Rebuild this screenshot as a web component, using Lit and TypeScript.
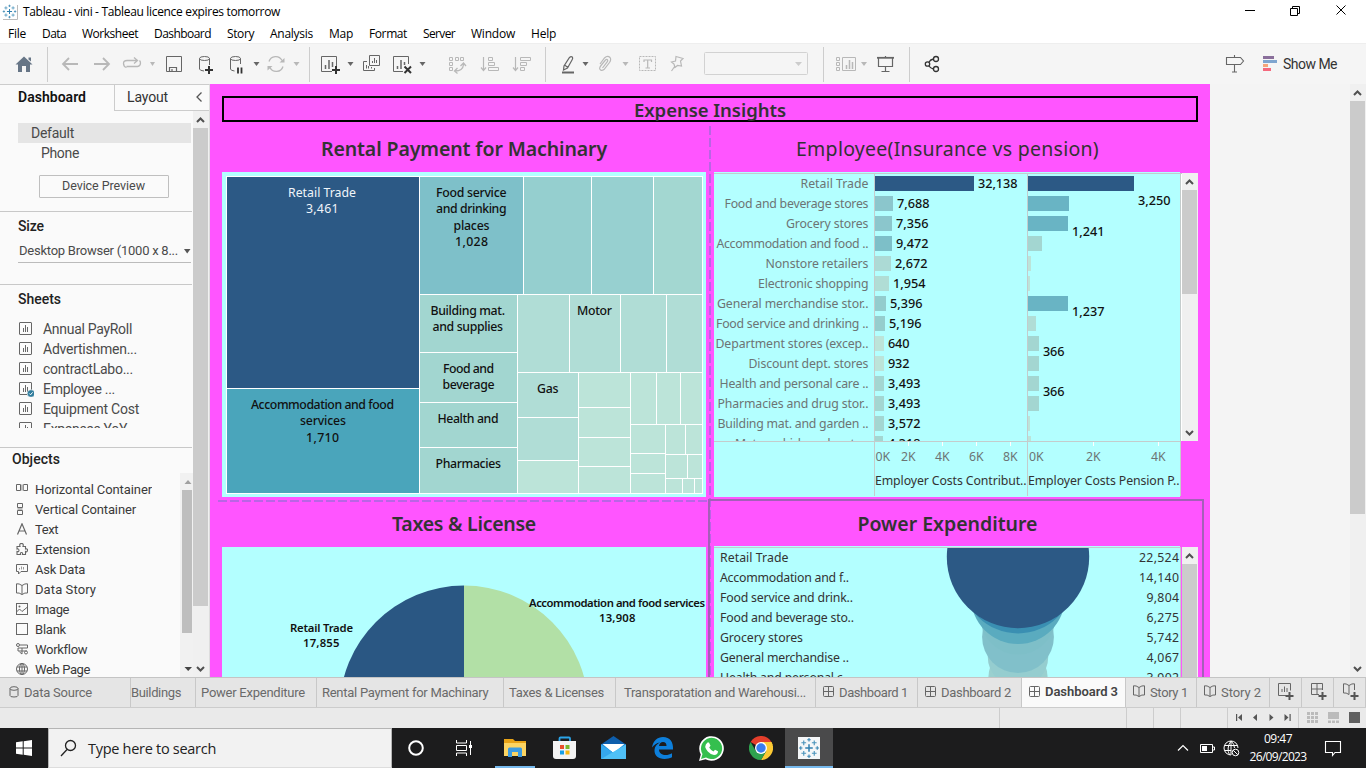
import { LitElement, html, svg, css } from 'lit';
import { customElement } from 'lit/decorators.js';

type Box = { x: number; y: number; w: number; h: number };

/* Icon drawn in window coordinates: its viewBox is its own place in the window. */
const icon = (b: Box, body: unknown, gap = 0) => html`<svg class="ic" width=${b.w} height=${b.h}
  viewBox="${b.x} ${b.y} ${b.w} ${b.h}" style="margin-left:${gap}px">${body}</svg>`;

const fit = (text: string, w: number, cls = '') => html`<span class="fit ${cls}" data-w=${w}>${text}</span>`;

const T = (x: number, y: number, w: number, text: string, cls = 'lb') =>
  svg`<text x=${x} y=${y} textLength=${w} class=${cls}>${text}</text>`;

const plus = (x: number, y: number, r: number, c: string, sw = 1) =>
  svg`<path d="M${x - r} ${y}H${x + r}M${x} ${y - r}V${y + r}" stroke=${c} stroke-width=${sw} fill="none"/>`;

const tableauMark = (cx: number, cy: number, k: number) => svg`
  ${plus(cx, cy, 3 * k, '#2f7fae', 1.2 * k)}
  ${[-1, 1].map(a => [-1, 1].map(b => plus(cx + 4.2 * k * a, cy + 4.2 * k * b, 1.9 * k, '#4a93bb', .9 * k)))}
  ${[-1, 1].map(a => svg`${plus(cx + 6.6 * k * a, cy, 1.4 * k, '#3b87b3', .9 * k)}${plus(cx, cy + 6.6 * k * a, 1.4 * k, '#3b87b3', .9 * k)}`)}`;

const chartGlyph = (x: number, y: number, s: number, c: string) => svg`
  <rect x=${x + .5} y=${y + .5} width=${s - 1} height=${s - 1} rx=".5" fill="none" stroke=${c}/>
  <path d="M${x + 4.5} ${y + 10}V${y + 6}M${x + 6.5} ${y + 10}V${y + 3}M${x + 8.5} ${y + 10}V${y + 5}" stroke=${c} fill="none"/>`;

const bookGlyph = (x: number, y: number, c: string) => svg`
  <path d="M${x + 6} ${y + 2.5}Q${x + 3} ${y + .3} ${x + .5} ${y + .8}V${y + 10}Q${x + 3} ${y + 9.4} ${x + 6} ${y + 11.5}Q${x + 9} ${y + 9.4} ${x + 11.5} ${y + 10}V${y + .8}Q${x + 9} ${y + .3} ${x + 6} ${y + 2.5}V${y + 11.5}" fill="none" stroke=${c}/>`;

const gridGlyph = (x: number, y: number, w: number, c: string) => svg`
  <rect x=${x + .5} y=${y + .5} width=${w - 1} height="10" rx="1" fill="none" stroke=${c}/>
  <path d="M${x + (w - 1) / 2 + .5} ${y}v11M${x} ${y + 5.5}h${w}" stroke=${c} fill="none"/>`;

const D = '#666', L = '#b8b8b8', K = '#333';

/* Toolbar content, left to right: x, width, drawing. */
const tools: [number, number, unknown][] = [
  [15, 18, svg`<path d="M24 56.500L32.500 64.500H30V72H26V66H22V72H18V64.500H15.500Z" fill="#667586"/><path d="M28.500 57.500h2.500v4l-2.500-2z" fill="#667586"/>`],
  [47, 1, 'sep'],
  [61, 18, svg`<path d="M78 64H63M69 58L63 64L69 70" fill="none" stroke=${L} stroke-width="1.800"/>`],
  [93, 18, svg`<path d="M94 64H109M103 58L109 64L103 70" fill="none" stroke=${L} stroke-width="1.800"/>`],
  [122, 20, svg`<path d="M126.500 67.500Q123.500 66.500 123.500 63.500Q123.500 60.500 127 60.500H137M134 57.500L137.500 60.500L134 63.500M126.500 66.500H137.500Q140.500 66 140.500 63Q140.500 61.500 139.500 60.500" fill="none" stroke=${L} stroke-width="1.300"/>`],
  [150, 6, svg`<path d="M150 62H155L152.500 66Z" fill=${L}/>`],
  [165, 18, svg`<path d="M166.500 56.500H181.500V71.500H166.500Z" fill="none" stroke=${D}/><path d="M169.500 71V67.500H176.500V71M172 71V69" fill="none" stroke=${D} stroke-width="1.200"/>`],
  [198, 17, svg`<path d="M204 71Q199.500 70.500 199.500 69V58.500M209.500 58.500V65" fill="none" stroke=${D}/><ellipse cx="204.500" cy="58.500" rx="5" ry="2" fill="none" stroke=${D}/><path d="M205 70H213M209 66V74" stroke=${K} stroke-width="2"/>`],
  [229, 15, svg`<path d="M234.500 71Q230.500 70.500 230.500 69V58.500M240.500 58.500V64" fill="none" stroke=${D}/><ellipse cx="235.500" cy="58.500" rx="5" ry="2" fill="none" stroke=${D}/><path d="M238 67.500V73.500M241.500 67.500V73.500" stroke=${K} stroke-width="1.800"/>`],
  [253, 7, svg`<path d="M253.500 62H259.500L256.500 66Z" fill=${D}/>`],
  [267, 18, svg`<path d="M269 61.500A7 7 0 0 1 282 60.500M283 66.500A7 7 0 0 1 270 67.500" fill="none" stroke=${L} stroke-width="1.300"/><path d="M279.500 62.500H284.500V58ZM272.500 66H267.500V70.500Z" fill=${L}/>`],
  [293, 7, svg`<path d="M293.500 62H299.500L296.500 66Z" fill=${L}/>`],
  [309, 1, 'sep'],
  [320, 22, svg`<path d="M332 71.500H321.500V56.500H336.500V66" fill="none" stroke=${D}/><path d="M325.500 69V65M329 69V60M332.500 67V62" stroke=${D} stroke-width="1.500"/><path d="M332 70H340M336 66V74" stroke=${K} stroke-width="2"/>`],
  [347, 7, svg`<path d="M347.500 62H353.500L350.500 66Z" fill=${D}/>`],
  [363, 18, svg`<path d="M369.500 55.500H379.500V65.500H369.500ZM367 61.500H363.500V70.500H374.500V68" fill="none" stroke=${D}/><path d="M372.500 63V61M374.500 63V58M376.500 63V60M366.500 68.500V65M368.500 68.500V66M371.500 68.500V67" stroke=${D}/>`],
  [392, 22, svg`<path d="M403 71.500H393.500V56.500H408.500V64" fill="none" stroke=${D}/><path d="M397.500 69V66M401 69V60M404.500 65V62" stroke=${D} stroke-width="1.500"/><path d="M404.500 66.500L411 73M411 66.500L404.500 73" stroke=${K} stroke-width="2"/>`],
  [419, 7, svg`<path d="M419.500 62H425.500L422.500 66Z" fill=${D}/>`],
  [448, 19, svg`<path d="M449.500 57.500h3v3h-3zM455.500 57.500h3v3h-3zM460.500 57.500h3v3h-3zM449.500 62.500h3v3h-3zM449.500 67.500h3v3h-3z" fill="none" stroke=${L}/><path d="M455 71Q463 71 463.500 64.500M460.500 66L463.500 63L466 66M457.500 68L454.500 71L457.500 73.500" fill="none" stroke=${L} stroke-width="1.300"/>`],
  [480, 20, svg`<path d="M483.500 57V70M481 67.500L483.500 70.500L486 67.500" fill="none" stroke=${L} stroke-width="1.200"/><path d="M488.500 57.500h4v3h-4zM488.500 62.500h6v3h-6zM488.500 67.500h10v3h-10z" fill="none" stroke=${L}/>`],
  [512, 20, svg`<path d="M515.500 57V70M513 67.500L515.500 70.500L518 67.500" fill="none" stroke=${L} stroke-width="1.200"/><path d="M520.500 57.500h10v3h-10zM520.500 62.500h6v3h-6zM520.500 67.500h4v3h-4z" fill="none" stroke=${L}/>`],
  [545, 1, 'sep'],
  [561, 15, svg`<path d="M569.500 57.500Q571 56 572.500 57.200Q573 58.500 572 60L567.500 68L563.500 70L564 66Z M564.500 65L568 67.500" fill="none" stroke=${D} stroke-width="1.200"/><path d="M562 72.500H574" stroke=${D} stroke-width="2"/>`],
  [582, 7, svg`<path d="M582.500 62H588.500L585.500 66Z" fill=${D}/>`],
  [598, 14, svg`<path d="M600 64L604.500 58Q607.500 55 610 57.500Q611.500 59.500 609.500 62.500L604 69.500Q601 71.500 599.800 69Q599.300 67.500 601 65.500L605.500 60Q607 58.800 607.600 60Q608 61 607 62.200L602.500 68" fill="none" stroke=${L} stroke-width="1.200"/>`],
  [622, 7, svg`<path d="M622.500 62H628.500L625.500 66Z" fill=${L}/>`],
  [639, 18, svg`<rect x="639.500" y="56.500" width="16" height="14" fill="none" stroke=${L} stroke-dasharray="2 1"/><path d="M644 62V60H651.500V62M647.700 60V68M645.500 68H650" fill="none" stroke=${L} stroke-width="1.200"/>`],
  [670, 15, svg`<path d="M676 56.500L683 58.500L680.500 61L681.500 66L677.500 65.500L675 67.500L674 64L671.500 62L675.500 61ZM675 66L671.500 71" fill="none" stroke=${L} stroke-width="1.200"/>`],
  [704, 104, svg`<rect x="704.500" y="52.500" width="103" height="22" rx="1" fill="#f5f5f5" stroke="#d2d2d2"/><path d="M795 62H802L798.500 66Z" fill="#ccc"/>`],
  [823, 1, 'sep'],
  [835, 22, svg`<path d="M836.500 57.500h3v3h-3zM836.500 62.500h3v3h-3zM836.500 67.500h3v3h-3zM842.500 57.500h13v13h-13z" fill="none" stroke=${L}/><path d="M846.500 69V65M849.500 69V60M852.500 69V62" stroke=${L} stroke-width="1.500"/>`],
  [861, 7, svg`<path d="M861 62H867L864 66Z" fill=${L}/>`],
  [877, 18, svg`<path d="M877 57.800H894" stroke=${D} stroke-width="1.800"/><path d="M878.500 58V66.500H892.500V58M885.500 66V71.500M881.500 71.500H889.500M885.500 56V58" fill="none" stroke=${D} stroke-width="1.200"/>`],
  [909, 1, 'sep'],
  [924, 17, svg`<g fill="none" stroke=${K} stroke-width="1.300"><circle cx="927.500" cy="64" r="2.200"/><circle cx="936" cy="59" r="2.500"/><circle cx="936" cy="69" r="2.500"/><path d="M929 62Q930.500 59.500 933.500 59M929 66Q930.500 68.500 933.500 69"/></g>`],
  [1225, 20, svg`<path d="M1226.500 57.500H1240.500L1243.500 61L1240.500 64.500H1226.500ZM1234.500 55V57M1234.500 64.500V72M1232 72H1237" fill="none" stroke=${D} stroke-width="1.100"/>`],
  [1263, 15, svg`<path d="M1263 56h11v3h-11z" fill="#8a6f9b"/><path d="M1263 60h14v3h-14z" fill="#7fa5cf"/><path d="M1263 64h5v3h-5z" fill="#f5a57a"/><path d="M1263 68h8v3h-8z" fill="#f5697d"/>`],
];

const menus: [string, number, number][] = [['File', 8, 18], ['Data', 42, 24], ['Worksheet', 82, 56], ['Dashboard', 154, 57], ['Story', 227, 27], ['Analysis', 270, 43], ['Map', 329, 24], ['Format', 369, 38], ['Server', 423, 32], ['Window', 471, 44], ['Help', 531, 25]];

const sheets: [string, number][] = [['Annual PayRoll', 89], ['Advertishmen...', 94], ['contractLabo...', 90], ['Employee ...', 72], ['Equipment Cost', 96], ['Expenses YoY', 84]];

const objects: [string, number, unknown][] = [
  ['Horizontal Container', 117, svg`<path d="M.5 1.500h4v6h-4zM7.500 1.500h4v6h-4z" fill="none" stroke="#666"/><path d="M5 1.500h2.500v6H5z" fill="#bbb"/>`],
  ['Vertical Container', 101, svg`<path d="M1.500 .500h5v4h-5zM1.500 7.500h5v4h-5z" fill="none" stroke="#666"/><path d="M1.500 5h5v2h-5z" fill="#bbb"/>`],
  ['Text', 23, svg`<path d="M1.500 11.500L6 .800L10.500 11.500M3 8H9" fill="none" stroke="#666" stroke-width="1.200"/>`],
  ['Extension', 55, svg`<path d="M1 3.500H4Q3 .500 5.500 .500T7 3.500H9.500V6Q12 5.500 11.500 7.500T9.500 8.500V11.500H6.500Q7 9.500 5.500 9.500T4.500 11.500H1V8.500Q3 9 3 7.300T1 6Z" fill="none" stroke="#666" stroke-width="1.100"/>`],
  ['Ask Data', 50, svg`<path d="M.5 1.500H11.500V8.500H5L2.500 11V8.500H.5Z" fill="none" stroke="#666"/><path d="M3.500 6.500V5M5.500 6.500V3.500M7.500 6.500V4" stroke="#999"/>`],
  ['Data Story', 61, bookGlyph(0, 0, '#666')],
  ['Image', 34, svg`<rect x=".5" y=".5" width="11" height="11" fill="none" stroke="#666"/><path d="M.5 9L3.500 6L6 8.500L11.500 4" fill="none" stroke="#666"/><circle cx="3.500" cy="3.500" r="1" fill="#666"/>`],
  ['Blank', 31, svg`<rect x=".5" y=".5" width="11" height="11" fill="none" stroke="#666"/>`],
  ['Workflow', 52, svg`<path d="M4 2H11.500V5H2V8H11M6 5V11L3.500 9" fill="none" stroke="#666"/><circle cx="2" cy="2" r="1.500" fill="#fafafa" stroke="#666"/><circle cx="10" cy="9.500" r="1.500" fill="#fafafa" stroke="#666"/>`],
  ['Web Page', 55, svg`<g fill="none" stroke="#666"><circle cx="6" cy="6" r="5.500"/><ellipse cx="6" cy="6" rx="2.500" ry="5.500"/><path d="M1 4H11M1 8H11M6 .500V11.500"/></g>`],
];

const A = '#95cfcf', B = '#a2d6d0', C = '#b0ddd6', E = '#bce4d9';
/* Treemap cells: left, top, right, bottom, fill. */
const cells: [number, number, number, number, string][] = [
  [227, 177, 419, 388, '#2c5985'], [227, 389, 419, 493, '#4aa5bb'],
  [420, 177, 523, 294, '#7ec0c9'], [524, 177, 591, 294, A], [592, 177, 653, 294, '#97d0d0'], [654, 177, 702, 294, '#a3d7d1'],
  [420, 295, 517, 352, B], [420, 353, 517, 402, B], [420, 403, 517, 447, B], [420, 448, 517, 493, B],
  [518, 295, 569, 372, C], [570, 295, 620, 372, C], [621, 295, 666, 372, C], [667, 295, 702, 372, C],
  [518, 373, 578, 417, C], [518, 418, 578, 460, C], [518, 461, 578, 493, E],
  [579, 373, 630, 407, E], [579, 408, 630, 437, E], [579, 438, 630, 466, E], [579, 467, 630, 493, E],
  [631, 373, 656, 424, E], [657, 373, 680, 424, E], [681, 373, 702, 424, E],
  [631, 425, 665, 453, E], [631, 454, 665, 473, E], [631, 474, 665, 493, E],
  [666, 425, 685, 454, E], [686, 425, 702, 454, E], [666, 455, 687, 478, E], [688, 455, 702, 478, E],
  [666, 479, 682, 493, E], [683, 479, 694, 493, E], [695, 479, 702, 493, E],
];

const F = '#69b4c4', G = '#a3d6d1';
/* label, label left, first bar end, fill, value, value left, value width, second bar end, fill */
const costs: [string, number, number, string, string, number, number, number, string][] = [
  ['Retail Trade', 800.5, 974, '#2c5985', '32,138', 978, 39.5, 1134, '#2c5985'],
  ['Food and beverage stores', 724.5, 893, '#8bc6cc', '7,688', 897, 32.5, 1069, F],
  ['Grocery stores', 786, 892, '#8bc6cc', '7,356', 896, 32.5, 1068, F],
  ['Accommodation and food ..', 716.5, 892, '#7dbfc8', '9,472', 896, 32.5, 1042, G],
  ['Nonstore retailers', 765.5, 891, '#acdad5', '2,672', 895, 32.5, 1031, E],
  ['Electronic shopping', 758, 889, '#b0ddd5', '1,954', 893, 32.5, 1030, E],
  ['General merchandise stor..', 717, 886, '#93cccd', '5,396', 890, 32.5, 1068, F],
  ['Food service and drinking ..', 716, 885, '#95cdcd', '5,196', 889, 32.5, 1036, C],
  ['Department stores (excep..', 715.5, 884, E, '640', 888, 21.5, 1039, G],
  ['Discount dept. stores', 748.5, 884, E, '932', 888, 21.5, 1039, G],
  ['Health and personal care ..', 719.5, 884, G, '3,493', 888, 32.5, 1039, G],
  ['Pharmacies and drug stor..', 717.5, 884, G, '3,493', 888, 32.5, 1039, G],
  ['Building mat. and garden ..', 717.5, 884, G, '3,572', 888, 32.5, 1030, E],
  ['Motor vehicle and parts ..', 735, 883, G, '4,318', 888, 32.5, 1031, E],
];

/* label, label width, value, value left, radius, fill */
const power: [string, number, string, number, number, string][] = [
  ['Retail Trade', 68, '22,524', 1139, 71.2, '#2c5985'],
  ['Accommodation and f..', 128.5, '14,140', 1139, 56.4, '#3a8fb2'],
  ['Food service and drink..', 132.5, '9,804', 1146.5, 47, '#5aabbf'],
  ['Food and beverage sto..', 133.5, '6,275', 1146.5, 37.6, '#7ebfc8'],
  ['Grocery stores', 82.5, '5,742', 1146.5, 35.9, '#81c0ca'],
  ['General merchandise ..', 128.5, '4,067', 1146.5, 30.2, '#95cdcf'],
  ['Health and personal c..', 128.5, '3,902', 1146.5, 29.6, '#9ad0cf'],
];

/* Bottom tabs: label, cell width, text width, left padding, kind */
const tabs: [string, number, number, number, string][] = [
  ['Data Source', 131, 68, 9, 'db'], ['Buildings', 65, 50, 0, ''], ['Power Expenditure', 121, 104, 5, ''],
  ['Rental Payment for Machinary', 187, 166.5, 5, ''], ['Taxes & Licenses', 112, 95, 5, ''],
  ['Transporatation and Warehousi...', 200, 182, 8, ''], ['Dashboard 1', 102, 69, 7, 'grid'],
  ['Dashboard 2', 104, 70, 7, 'grid'], ['Dashboard 3', 104, 73, 7, 'grid on'],
  ['Story 1', 71, 38, 7, 'book'], ['Story 2', 73, 40, 7, 'book'],
];

const vscroll = (x: number, y: number, y2: number, t1: number, t2: number, down = true) => svg`
  <rect x=${x} y=${y} width="16" height=${y2 - y} fill="#f0f0f0"/>
  <rect x=${x} y=${t1} width="15" height=${t2 - t1} fill="#cbcbcb"/>
  <path d="M${x + 4} ${y + 11}L${x + 7.500} ${y + 7.500}L${x + 11} ${y + 11}" fill="none" stroke="#505050" stroke-width="2"/>
  ${down ? svg`<path d="M${x + 4} ${y2 - 10}L${x + 7.500} ${y2 - 6.500}L${x + 11} ${y2 - 10}" fill="none" stroke="#505050" stroke-width="2"/>` : ''}`;

@customElement('app-root')
export class AppRoot extends LitElement {
  static styles = css`
    :host { display: flex; flex-direction: column; width: 1366px; height: 768px; overflow: hidden; background: #fff;
      font-family: "Open Sans", "Noto Sans", sans-serif; font-size: 12px; color: #000; }
    * { box-sizing: border-box; }
    svg { display: block; flex: none; }
    .ic { flex: none; }
    .fit { white-space: pre; display: inline-block; flex: none; }
    .titlebar { height: 24px; display: flex; align-items: center; padding-left: 2px; }
    .titlebar .fit { margin-left: 3px; line-height: 22px; }
    .titlebar .win { margin-left: auto; }
    .menubar { height: 19px; display: flex; line-height: 20px; }
    .toolbar { height: 41px; background: #f5f5f5; border-top: 1px solid #eee; display: flex; align-items: center; }
    .sep { width: 1px; height: 35px; background: #cdcdcd; flex: none; }
    .show { font-family: Roboto, sans-serif; font-size: 14px; color: #333; margin-left: 5px; }
    .main { height: 593px; display: flex; background: #f4f4f4; overflow: hidden; }
    .side { width: 210px; background: #fafafa; border-top: 1px solid #ccc; border-right: 1px solid #ddd; display: flex; flex-direction: column;
      font-family: Roboto, sans-serif; font-size: 14px; color: #4a4a4a; }
    .sidetabs { display: flex; height: 26px; flex: none; line-height: 25px; }
    .sidetabs .a { width: 114px; padding-left: 18px; font-weight: 600; color: #111; }
    .sidetabs .b { flex: 1; border-left: 1px solid #ccc; border-bottom: 1px solid #ccc; padding-left: 12px; display: flex; line-height: 25px; color: #333; }
    .sidebody { display: flex; flex: 1; min-height: 0; }
    .panel { width: 193px; display: flex; flex-direction: column; }
    .block { border-bottom: 1px solid #c8c8c8; width: 192px; padding-left: 18px; flex: none; }
    .devices { height: 101px; padding-top: 12px; }
    .device { height: 20px; line-height: 21px; padding-left: 13px; width: 173px; }
    .device.on { background: #e5e5e5; }
    .device.sub { padding-left: 23px; }
    .preview { width: 130px; height: 23px; margin: 12px 0 0 21px; border: 1px solid #bfbfbf; border-radius: 1px; font-size: 12.5px; line-height: 20px; padding-left: 22px; }
    .size { height: 73px; padding-top: 4px; }
    .head { font-weight: 500; color: #222; height: 22px; line-height: 21px; }
    .drop { display: flex; align-items: center; height: 25px; width: 173px; border-bottom: 1px solid #bbb; font-size: 13px; padding-left: 1px; }
    .sheets { height: 163px; padding-top: 4px; overflow: hidden; }
    .list { margin-top: 8px; height: 109px; overflow: hidden; }
    .row { display: flex; height: 20px; align-items: center; }
    .list .row svg { margin: 0 9px 2px 1px; }
    .objects { padding: 1px 0 0 12px; flex: 1; min-height: 0; overflow: hidden; display: flex; flex-direction: column; }
    .objwrap { display: flex; height: 206px; justify-content: space-between; padding-top: 1px; }
    .objlist { padding: 7px 0 0 4px; color: #3a3a3a; font-size: 13px; overflow: hidden; }
    .objlist .row svg { margin-right: 7px; }
    .canvas { position: relative; width: 1000px; background: #ff55ff; padding: 12px 12px 0; overflow: hidden; font-family: "Noto Sans", sans-serif; color: #333; flex: none; }
    .headline { height: 26px; border: 2px solid #000; text-align: center; font-size: 18.5px; font-weight: 600; line-height: 24px; }
    .grid { display: grid; grid-template-columns: 484px 484px; column-gap: 8px; grid-template-rows: 50px 325px 49px 131px; }
    .cardtitle { font-size: 19.5px; font-weight: 600; text-align: center; line-height: 54px; height: 50px; }
    .cardtitle.plain { font-weight: 400; padding-right: 17px; }
    .cardtitle.shift { padding-right: 17px; }
    .guides { position: absolute; left: 0; top: 0; }
    .lb { font: 500 12.300px "Noto Sans", sans-serif; fill: #111; }
    .vl { font: 500 12.700px "Noto Sans", sans-serif; fill: #111; }
    .wt { font: 400 12.300px "Noto Sans", sans-serif; fill: #f0f5fa; }
    .gr { font: 400 12.300px "Noto Sans", sans-serif; fill: #6c7474; }
    .dk { font: 400 12.300px "Noto Sans", sans-serif; fill: #333; }
    .pb { font: 600 11.300px "Noto Sans", sans-serif; fill: #111; }
    .outer { margin-left: auto; }
    .tabs { height: 31px; display: flex; background: #e5e5e5; border-top: 1px solid #c4c4c4; border-bottom: 1px solid #ccc; font-family: Roboto, sans-serif; font-size: 13px; color: #6a6a6a; }
    .tab { border-right: 1px solid #c8c8c8; display: flex; align-items: center; flex: none; }
    .tab svg { margin-right: 5px; margin-bottom: 2px; }
    .tab.on { background: #fafafa; color: #444; font-weight: 600; padding-bottom: 2px; }
    .tab.on svg { margin-bottom: 0; }
    .status { height: 20px; background: #eaeaea; }
    .taskbar { height: 40px; background: #1c1c1d; display: flex; align-items: center; color: #fff; }
    .search { width: 344px; height: 40px; background: #f2f2f2; border: 1px solid #b5b5b5; border-bottom-color: #ddd; margin-left: 16px; display: flex; align-items: center; font-size: 14.5px; color: #222; padding-left: 11px; }
    .search .fit { margin-left: 10px; }
    .app { height: 40px; width: 49px; display: flex; justify-content: center; align-items: center; flex: none; }
    .app.lead { width: 48px; }
    .app.run { border-bottom: 2px solid #76b9ed; width: 40px; margin: 0 5px 0 7px; padding-top: 2px; }
    .app.front { background: #4a4a4b; border-bottom: 2px solid #76b9ed; width: 48px; padding-top: 2px; }
    .clock { display: flex; flex-direction: column; align-items: center; font-size: 12px; line-height: 18px; margin-left: 9px; width: 58px; }
  `;

  firstUpdated() {
    this.spread();
    document.fonts?.ready.then(() => this.spread());
  }

  /* Tracks each label so that it fills the width its data gives. */
  private spread() {
    this.renderRoot.querySelectorAll<HTMLElement>('.fit').forEach(el => {
      el.style.letterSpacing = '0px';
      const n = (el.textContent || '').length;
      el.style.letterSpacing = `${(Number(el.dataset.w) - el.getBoundingClientRect().width) / n}px`;
    });
  }

  private toolbar() {
    let at = 0;
    return tools.map(([x, w, body]) => {
      const gap = x - at;
      at = x + w;
      return body === 'sep' ? html`<i class="sep" style="margin-left:${gap}px"></i>`
        : icon({ x, y: 50, w, h: 28 }, body, gap);
    });
  }

  private menu() {
    let at = 0;
    return menus.map(([t, x, w]) => {
      const gap = x - at;
      at = x + w;
      return html`<span style="margin-left:${gap}px">${fit(t, w)}</span>`;
    });
  }

  private sidebar() {
    return html`<aside class="side">
      <div class="sidetabs"><div class="a">${fit('Dashboard', 68)}</div>
        <div class="b">${fit('Layout', 41)}${icon({ x: 194, y: 85, w: 10, h: 24 }, svg`<path d="M201.500 92.500L197 97L201.500 101.500" fill="none" stroke="#555" stroke-width="1.300"/>`, 26)}</div></div>
      <div class="sidebody"><div class="panel">
        <section class="block devices"><div class="device on">${fit('Default', 43)}</div><div class="device sub">${fit('Phone', 38)}</div>
          <div class="preview">${fit('Device Preview', 83)}</div></section>
        <section class="block size"><div class="head">${fit('Size', 26)}</div>
          <div class="drop">${fit('Desktop Browser (1000 x 8...', 159)}${icon({ x: 184, y: 240, w: 7, h: 20 }, svg`<path d="M184 249H190.500L187.200 253.500Z" fill="#555"/>`, 6)}</div></section>
        <section class="block sheets"><div class="head">${fit('Sheets', 43)}</div><div class="list">
          ${sheets.map(([t, w], i) => html`<div class="row"><svg width="15" height="17" viewBox="0 0 15 17">${chartGlyph(0, 2, 13, '#666')}
            ${i === 3 ? svg`<circle cx="12" cy="13.500" r="3.800" fill="#2f7c9c" stroke="#fafafa" stroke-width=".6"/><path d="M10.300 13.500l1.300 1.300l2-2.500" stroke="#fff" fill="none"/>` : ''}</svg>${fit(t, w)}</div>`)}
        </div></section>
        <section class="objects"><div class="head">${fit('Objects', 48)}</div><div class="objwrap"><div class="objlist">
          ${objects.map(([t, w, g]) => html`<div class="row"><svg width="12" height="12" viewBox="0 0 12 12">${g}</svg>${fit(t, w)}</div>`)}</div>
          ${icon({ x: 180, y: 472, w: 13, h: 205 }, svg`<rect x="180" y="473" width="13" height="204" fill="#f1f1f1"/><rect x="182" y="490" width="10" height="143" fill="#bebebe"/><path d="M184.500 484L188 480L191.500 484Z" fill="#a0a0a0"/><path d="M184.500 667H192L188.200 671Z" fill="#444"/>`)}
        </div></section></div>
        ${icon({ x: 193, y: 111, w: 16, h: 566 }, vscroll(193, 111, 677, 128, 606))}
      </div></aside>`;
  }

  private treemap() {
    const t: [number, number, number, string, string?][] = [
      [288, 197, 68, 'Retail Trade', 'wt'], [306, 213, 32.5, '3,461', 'wt'],
      [251, 409, 143, 'Accommodation and food'], [300, 425, 46, 'services'], [306, 442, 33, '1,710'],
      [436, 197, 70.5, 'Food service'], [436, 213, 70.5, 'and drinking'], [453.5, 230, 36, 'places'], [455, 246, 33, '1,028'],
      [430.5, 315, 74.5, 'Building mat.'], [432.5, 331, 70.5, 'and supplies'], [443, 373, 51, 'Food and'], [442.5, 389, 52, 'beverage'],
      [437.5, 423, 61, 'Health and'], [435.5, 468, 65.5, 'Pharmacies'], [577, 315, 35, 'Motor'], [537, 393, 21.5, 'Gas']];
    return icon({ x: 222, y: 172, w: 484, h: 325 }, svg`<rect x="222" y="172" width="484" height="325" fill="#b3ffff"/>
      <rect x="226" y="176" width="477" height="318" fill="#fff"/>
      ${cells.map(([a, b, c, d, f]) => svg`<rect x=${a} y=${b} width=${c - a} height=${d - b} fill=${f}/>`)}
      ${t.map(([x, y, w, s, c]) => T(x, y, w, s, c || 'lb'))}`);
  }

  private bars() {
    const ticks: [number, number, string][] = [[875.5, 0, '0K'], [901, 908, '2K'], [935, 942, '4K'], [969, 976, '6K'], [1003, 1010, '8K'], [1029, 0, '0K'], [1086, 1093, '2K'], [1151, 1158, '4K']];
    return icon({ x: 714, y: 172, w: 484, h: 325 }, svg`<defs><clipPath id="rows"><rect x="714" y="174" width="466" height="267"/></clipPath></defs>
      <rect x="714" y="172" width="466" height="325" fill="#b3ffff"/>
      <g clip-path="url(#rows)">${costs.map(([l, lx, e1, f1, v, vx, vw, e2, f2], i) => svg`
        ${T(lx, 188 + 20 * i, 868.5 - lx, l, 'gr')}
        <rect x="875" y=${176 + 20 * i} width=${e1 - 875} height="15" fill=${f1}/>
        ${T(vx, 188 + 20 * i, vw, v, 'vl')}
        <rect x="1028" y=${176 + 20 * i} width=${e2 - 1028} height="15" fill=${f2}/>`)}</g>
      ${T(1138, 205, 32.5, '3,250', 'vl')}${T(1072, 236, 32.5, '1,241', 'vl')}${T(1072, 316, 32.5, '1,237', 'vl')}${T(1043, 356, 21.5, '366', 'vl')}${T(1043, 396, 21.5, '366', 'vl')}
      <path d="M714 173.500H1182M714 441.500H1181M874.500 174V496M1027.500 174V496M1180.500 174V496" stroke="#c4cccc" fill="none"/>
      ${ticks.map(([x, k, s]) => svg`${T(x, 461, 14.5, s, 'gr')}${k ? svg`<path d="M${k + .5} 442V446" stroke="#fff"/>` : ''}`)}
      ${T(875, 485, 151.5, 'Employer Costs Contribut..', 'dk')}${T(1028, 485, 151.5, 'Employer Costs Pension P..', 'dk')}
      <path d="M1181.500 174V441" stroke="#fff"/>
      ${vscroll(1182, 173, 441, 190, 294)}`);
  }

  private pie() {
    return icon({ x: 222, y: 546, w: 484, h: 131 }, svg`<rect x="222" y="547" width="484" height="130" fill="#b3ffff"/>
      <path d="M464 710V585.500A124.500 124.500 0 0 0 339.500 710Z" fill="#2a5783"/>
      <path d="M464 710V585.500A124.500 124.500 0 0 1 588.500 710Z" fill="#b2e0a6"/>
      ${T(290, 632, 63, 'Retail Trade', 'pb')}${T(303, 647, 36.5, '17,855', 'pb')}
      ${T(529, 607, 176, 'Accommodation and food services', 'pb')}${T(599, 622, 36.5, '13,908', 'pb')}`);
  }

  private circles() {
    return icon({ x: 714, y: 546, w: 484, h: 131 }, svg`<defs><clipPath id="funnel"><rect x="714" y="548" width="466" height="129"/></clipPath></defs>
      <rect x="714" y="546" width="466" height="131" fill="#b3ffff"/>
      <g clip-path="url(#funnel)">${power.map((p, i) => [p, i] as const).reverse().map(([p, i]) => svg`<circle cx="1018" cy=${557 + 20 * i} r=${p[4]} fill=${p[5]}/>`)}</g>
      ${power.map(([l, w, v, vx], i) => svg`${T(720, 562 + 20 * i, w + .5, l, 'dk')}${T(vx, 562 + 20 * i, 1179 - vx, v, 'dk')}`)}
      <path d="M714 547.500H1181M1180.500 548V677" stroke="#c4cccc" fill="none"/>
      ${vscroll(1182, 547, 677, 564, 677, false)}`);
  }

  private tabGlyph(kind: string) {
    if (kind === 'db') return html`<svg width="10" height="12" viewBox="0 0 10 12"><path d="M1 2.500V9.500Q1 11 5 11T9 9.500V2.500" fill="none" stroke="#666"/><ellipse cx="5" cy="2.500" rx="4" ry="1.800" fill="none" stroke="#666"/></svg>`;
    if (kind.startsWith('grid')) return html`<svg width="11" height="12" viewBox="0 0 11 12">${gridGlyph(0, 0, 11, '#666')}</svg>`;
    if (kind === 'book') return html`<svg width="12" height="13" viewBox="0 0 12 13">${bookGlyph(0, 0, '#666')}</svg>`;
    return '';
  }

  render() {
    return html`
      <header class="titlebar">${icon({ x: 2, y: 3, w: 18, h: 17 }, svg`<path d="M3 18.500H17.500V4" fill="none" stroke="#bbb"/>${tableauMark(9.5, 10.5, .85)}`)}
        ${fit('Tableau - vini - Tableau licence expires tomorrow', 257)}
        <span class="win">${icon({ x: 1240, y: 0, w: 126, h: 24 }, svg`<path d="M1245 10.500H1255M1290.500 8.500H1297.500V15.500H1290.500ZM1292.500 8V6.500H1299.500V13.500H1298M1336.500 5.500L1345.500 14.500M1345.500 5.500L1336.500 14.500" fill="none" stroke="#000"/>`)}</span></header>
      <nav class="menubar">${this.menu()}</nav>
      <div class="toolbar">${this.toolbar()}<span class="show">${fit('Show Me', 54)}</span></div>
      <main class="main">${this.sidebar()}
        <section class="canvas"><div class="headline">${fit('Expense Insights', 152)}</div>
          <div class="grid">
            <div class="cardtitle">${fit('Rental Payment for Machinary', 286)}</div><div class="cardtitle plain">${fit('Employee(Insurance vs pension)', 303)}</div>
            ${this.treemap()}${this.bars()}
            <div class="cardtitle">${fit('Taxes & License', 144)}</div><div class="cardtitle shift">${fit('Power Expenditure', 180)}</div>
            ${this.pie()}${this.circles()}
          </div>
          <svg class="guides" width="1000" height="593" viewBox="210 84 1000 593">
            <path d="M710 126V677M218 501H708" fill="none" stroke="#a968dd" stroke-width="2" stroke-dasharray="9 3" opacity=".8"/>
            <path d="M709 677V500H1203V677" fill="none" stroke="#a45fb8" stroke-width="2"/>
          </svg></section>
        <span class="outer">${icon({ x: 1350, y: 84, w: 16, h: 593 }, vscroll(1350, 84, 677, 101, 514))}</span>
      </main>
      <div class="tabs">${tabs.map(([t, w, tw, pad, k]) => html`<div class="tab ${k === 'grid on' ? 'on' : ''}" style="width:${w}px;padding-left:${pad}px">${this.tabGlyph(k)}${fit(t, tw)}</div>`)}
        ${[0, 1, 2].map(i => html`<div class="tab" style="width:32px;padding-left:${i === 0 ? 8 : 9}px"><svg width="17" height="17" viewBox="0 0 17 17">
          ${i === 0 ? svg`<path d="M8 12.500H.500V.500H12.500V7.500" fill="none" stroke="#666"/><path d="M4 9V6M6.500 9V3.500M9 9V5" stroke="#666"/>`
            : i === 1 ? svg`<path d="M8 11.500H.500V.500H11.500V7M6 .500V11.500M.500 6H11.500" fill="none" stroke="#666"/>` : svg`<path d="M6 11.500Q3 9.400 .500 10V.800Q3 .300 6 2.500Q9 .300 11.500 .800V7M6 2.500V11.500" fill="none" stroke="#666"/>`}
          <path d="M7.500 13H15.500M11.500 9V17" stroke="#555" stroke-width="2"/></svg></div>`)}</div>
      <div class="status">${icon({ x: 0, y: 708, w: 1366, h: 20 }, svg`
        <path d="M999.500 708V728M1126.500 708V728M1153.500 708V728M1180.500 708V728M1227.500 708V728M1298.500 708V728" stroke="#cdcdcd"/>
        <path d="M1236 714h1.200v7h-1.200zM1242 714v7l-4-3.500zM1257 714v7l-4-3.500zM1269.500 714v7l4-3.500zM1284.500 714v7l4-3.500zM1289.500 714h1.200v7h-1.200z" fill="#555"/>
        ${[0, 1, 2].map(r => [0, 1, 2].map(c => svg`<rect x=${1307 + c * 4} y=${712 + r * 4} width="3" height="3" fill="#bbb"/>`))}
        <path d="M1328 712h11v7h-11zM1328 720.500h3v2.500h-3zM1332 720.500h3v2.500h-3zM1336 720.500h3v2.500h-3z" fill="#bbb"/><rect x="1349" y="712" width="11" height="11" fill="#606060"/>`)}</div>
      <footer class="taskbar">
        ${icon({ x: 16, y: 738, w: 16, h: 20 }, svg`<path d="M16 742.300L22.700 741.300V747.500H16ZM23.700 741.200L32 740V747.500H23.700ZM16 748.500H22.700V754.700L16 753.700ZM23.700 748.500H32V756L23.700 754.800Z" fill="#fff"/>`, 16)}
        <div class="search">${icon({ x: 60, y: 738, w: 18, h: 20 }, svg`<circle cx="70.500" cy="745.500" r="5" fill="none" stroke="#222" stroke-width="1.300"/><path d="M67 749.500L61 756" stroke="#222" stroke-width="1.300"/>`)}${fit('Type here to search', 128)}</div>
        <span class="app lead"><svg width="18" height="18" viewBox="0 0 18 18"><circle cx="9" cy="9" r="6.800" fill="none" stroke="#fff" stroke-width="2"/></svg></span>
        <span class="app lead"><svg width="16" height="16" viewBox="0 0 16 16"><path d="M.5 0V3H10.500V0M.5 16V13H10.500V16M.5 5.500H10.500V10.500H.500ZM14.500 1V15" fill="none" stroke="#fff"/><rect x="13" y="5" width="3" height="3" fill="#fff"/></svg></span>
        <span class="app run"><svg width="22" height="20" viewBox="0 0 22 20"><path d="M0 1H9L11 3H22V18H0Z" fill="#e8a317"/><path d="M0 5H22V18H0Z" fill="#fcd462"/><path d="M4 19V11Q4 9.500 5.500 9.500H16.500Q18 9.500 18 11V19H14V14H8V19Z" fill="#3d9be0"/></svg></span>
        <span class="app"><svg width="24" height="24" viewBox="0 0 24 24"><path d="M6.500 6V2.500Q6.500 1.500 7.500 1.500H16Q17 1.500 17 2.500V6" fill="none" stroke="#2ba4e8" stroke-width="1.800"/><path d="M0 5H23V20Q23 23 20 23H3Q0 23 0 20Z" fill="#f3f3f3"/><path d="M7 9h4v4H7z" fill="#e9502c"/><path d="M12.500 9h4v4h-4z" fill="#7cb82b"/><path d="M7 14.500h4v4H7z" fill="#18a0e8"/><path d="M12.500 14.500h4v4h-4z" fill="#f7b712"/></svg></span>
        <span class="app"><svg width="25" height="24" viewBox="0 0 25 24"><path d="M0 8.500L12.500 0L25 8.500V12H0Z" fill="#0e5eac"/><path d="M0 8.500H25V23H0Z" fill="#1b8fdd"/><path d="M1.500 8H23.500L12.500 17Z" fill="#fff"/><path d="M0 8.500L12.500 17L25 8.500V23H0Z" fill="#1b8fdd"/><path d="M0 23L12.500 17L0 8.500Z" fill="#35a8ee"/><path d="M0 23L25 8.500V23Z" fill="#4fc0f7"/></svg></span>
        <span class="app"><svg width="22" height="22" viewBox="0 0 22 22"><path d="M0 10.500C1 4 5.500 0 11 0C18 0 21.500 5 21 12.500H7C7 16.500 10.500 18 13.500 18C16 18 18 17.300 20 16.200V20.300C17.500 21.600 15.500 22 12.500 22C6 22 2.300 18.500 2.500 13C2.600 9.500 5 6.800 8 5.500C4.500 6 2 7.800 0 10.500ZM7 9H14.500C14.500 6.500 13.300 5 11 5C8.800 5 7.500 6.500 7 9Z" fill="#0d7fdb"/></svg></span>
        <span class="app"><svg width="25" height="25" viewBox="0 0 25 25"><path d="M0 25L1.800 18.500A12.300 12.300 0 1 1 6.500 23.200Z" fill="#fff"/><path d="M2 23L3.500 18A10.600 10.600 0 1 1 7 21.500Z" fill="#35bf4e"/><path d="M8.500 6.500L10 6.500L11.500 9.800L10.200 11.500Q11.700 14.200 14.500 15.500L16 13.800L19 15.300Q19 19 15 19Q11.500 18.500 8.800 15.500Q4 10 8.500 6.500Z" fill="#fff"/></svg></span>
        <span class="app"><svg width="24" height="24" viewBox="0 0 24 24"><path d="M12 12L1.600 6A12 12 0 0 1 22.400 6H12Z" fill="#e43e2b"/><path d="M12 12L22.400 6A12 12 0 0 1 12 24L17.200 15Z" fill="#fcc934"/><path d="M12 12L6.800 15L1.600 6A12 12 0 0 0 12 24L17.200 15Z" fill="#2fa24f"/><path d="M12 6H22.400A12 12 0 0 1 23.500 9H12Z" fill="#fcc934"/><circle cx="12" cy="12" r="6" fill="#fff"/><circle cx="12" cy="12" r="4.700" fill="#3a7cf0"/></svg></span>
        <span class="app front"><svg width="22" height="22" viewBox="0 0 22 22"><rect width="22" height="22" fill="#f4f6f8"/>${tableauMark(11, 11, 1.25)}</svg></span>
        ${icon({ x: 1174, y: 728, w: 66, h: 40 }, svg`<path d="M1178 750.500L1183 745.500L1188 750.500" fill="none" stroke="#fff" stroke-width="1.200"/>
          <path d="M1200.500 744.500H1212.500V752.500H1200.500ZM1213 747h1.500v3h-1.500" fill="none" stroke="#fff"/><rect x="1202" y="746" width="5" height="5" fill="#fff"/>
          <g fill="none" stroke="#fff"><path d="M1231 755A7 7 0 1 1 1238 748M1224.500 745.500H1237.500M1224.500 750.500H1231M1231 741V755M1231 741Q1226 748 1229.500 755M1231 741Q1234.500 744 1234.500 748"/><circle cx="1235.500" cy="752.500" r="3.300"/><path d="M1233.200 750.200L1237.800 754.800"/></g>`, 341)}
        <div class="clock">${fit('09:47', 28)}${fit('26/09/2023', 57)}</div>
        ${icon({ x: 1324, y: 738, w: 18, h: 20 }, svg`<path d="M1325.500 741.500H1340.500V752.500H1335L1332.500 755.500V752.500H1325.500Z" fill="none" stroke="#fff" stroke-width="1.100"/>`, 17)}
      </footer>`;
  }
}
